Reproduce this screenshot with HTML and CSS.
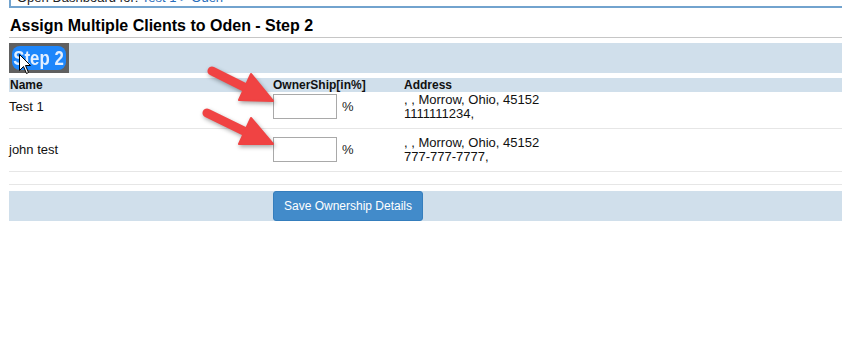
FILE: index.html
```html
<!DOCTYPE html>
<html lang="en">
<head>
  <meta charset="UTF-8" />
  <meta name="viewport" content="width=device-width, initial-scale=1.0" />
  <title>Assign Multiple Clients</title>
  <link rel="stylesheet" href="styles.css">
</head>
<body>
  <div class="page">
    <!-- breadcrumb box, scrolled mostly out of view -->
    <div class="crumb-box">
      Open Dashboard for: <a href="#">Test 1 &gt; Oden</a>
    </div>

    <h2 class="page-title">Assign Multiple Clients to Oden - Step 2</h2>

    <div class="step-bar">
      <span class="step-select"><span class="step-label"><span class="step-text">Step 2</span></span></span>
    </div>

    <div class="grid-head">
      <div>Name</div>
      <div>OwnerShip[in%]</div>
      <div>Address</div>
    </div>

    <div class="grid-row row-tight">
      <div class="cell-name">Test 1</div>
      <div class="cell-own"><input type="text" class="own-input" /> <span>%</span></div>
      <div class="cell-addr">, , Morrow, Ohio, 45152<br>1111111234,</div>
    </div>

    <div class="grid-row">
      <div class="cell-name">john test</div>
      <div class="cell-own"><input type="text" class="own-input" /> <span>%</span></div>
      <div class="cell-addr">, , Morrow, Ohio, 45152<br>777-777-7777,</div>
    </div>

    <div class="spacer"></div>

    <div class="save-bar">
      <button type="button" class="save-btn">Save Ownership Details</button>
    </div>
  </div>

  <!-- annotation overlay: arrows + mouse cursor -->
  <svg class="overlay" width="842" height="342" viewBox="0 0 842 342">
    <g class="arrow">
      <line x1="212" y1="71" x2="250" y2="90" />
      <polygon points="273,101 251,74 239,100" />
    </g>
    <g class="arrow">
      <line x1="207" y1="113" x2="250" y2="134" />
      <polygon points="273,144 251,118 239,144" />
    </g>
    <path class="cursor" d="M19.5,54.5 L19.5,70.5 L23.5,66.5 L26.5,73.5 L28.5,72.5 L25.5,65.5 L30.5,65.5 Z" />
  </svg>
</body>
</html>
```

FILE: styles.css
```css
body {
  font-family: "Liberation Sans", Arial, sans-serif;
  font-size: 13px;
  color: #000;
  background: #fff;
  margin: 0;
  padding: 0;
  position: relative;
  overflow: hidden;
}

.page {
  margin-left: 9px;
}

.crumb-box {
  margin-top: -12px;
  height: 16px;
  line-height: 16px;
  padding-left: 6px;
  border: 2px solid #72a3ce;
  border-right: none;
  color: #222;
}

.crumb-box a {
  color: #2a6ebb;
  text-decoration: none;
}

.page-title {
  font-size: 16px;
  line-height: 20px;
  font-weight: bold;
  margin: 8px 0 0;
  padding: 0 0 1px 1px;
  border-bottom: 1px solid #c6c6c6;
}

.step-bar {
  margin-top: 5px;
  height: 30px;
  background: #d0dfeb;
  display: flex;
}

.step-select {
  width: 60px;
  background: #606060;
  padding: 3px;
  box-sizing: border-box;
  display: flex;
}

.step-label {
  flex: 1;
  background: #1d86fb;
  border-radius: 8px;
  display: flex;
  align-items: center;
  justify-content: center;
  overflow: hidden;
}

.step-text {
  display: inline-block;
  color: #e3efff;
  font-weight: bold;
  font-size: 21px;
  line-height: 24px;
  white-space: nowrap;
  transform: scaleX(0.8);
}

.grid-head,
.grid-row {
  display: grid;
  grid-template-columns: 264px 131px 1fr;
}

.grid-head {
  margin-top: 5px;
  background: #d0dfeb;
  font-size: 12px;
  font-weight: bold;
  line-height: 14px;
  height: 14px;
  color: #111;
}

.grid-head div:first-child {
  padding-left: 1px;
}

.grid-row {
  padding: 8px 0 7px;
  border-bottom: 1px solid #e6e6e6;
  align-items: start;
}

.grid-row.row-tight {
  padding: 2px 0 7px;
}

.cell-name {
  line-height: 25px;
  color: #111;
}

.cell-own {
  display: flex;
  align-items: center;
  gap: 5px;
  height: 25px;
}

.cell-own span {
  color: #222;
}

.own-input {
  width: 64px;
  height: 25px;
  box-sizing: border-box;
  border: 1px solid #a9a9a9;
  padding: 2px 4px;
  margin: 0;
  font-size: 13px;
}

.cell-addr {
  margin-top: -1px;
  line-height: 14px;
  color: #111;
}

.spacer {
  height: 12px;
  border-bottom: 1px solid #e6e6e6;
}

.save-bar {
  margin-top: 6px;
  height: 30px;
  background: #d0dfeb;
  padding-left: 264px;
}

.save-btn {
  width: 150px;
  height: 30px;
  background-color: #428bca;
  border: 1px solid #357ebd;
  border-radius: 3px;
  color: #fff;
  font-family: "Liberation Sans", Arial, sans-serif;
  font-size: 12px;
  padding: 0;
  cursor: pointer;
}

.overlay {
  position: absolute;
  left: 0;
  top: 0;
  pointer-events: none;
}

.arrow {
  filter: drop-shadow(1px 2px 2px rgba(0, 0, 0, 0.35));
}

.arrow line {
  stroke: #f04343;
  stroke-width: 9;
  stroke-linecap: round;
}

.arrow polygon {
  fill: #f04343;
  stroke: #f04343;
  stroke-width: 2;
  stroke-linejoin: round;
}

.cursor {
  fill: #fff;
  stroke: #000;
  stroke-width: 1;
}
```
